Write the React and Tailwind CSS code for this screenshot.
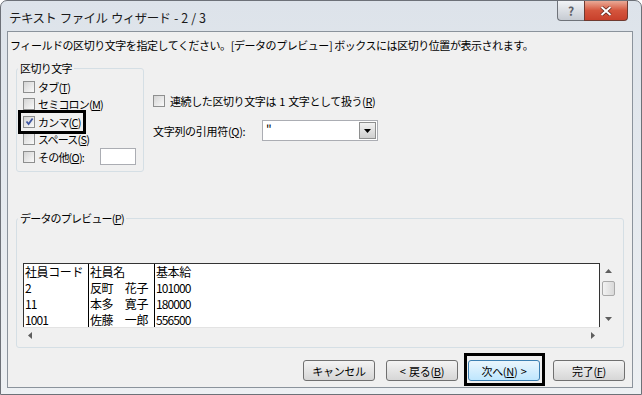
import React from "react";

const font = "font-['Noto_Sans_CJK_JP','Noto_Sans',sans-serif]";

function Check({ checked }) {
  return (
    <span className="flex h-[12px] w-[12px] shrink-0 items-center justify-center border border-[#8e8f8f] bg-linear-to-br from-[#d4d4d4] to-[#fafafa]">
      {checked && (
        <svg width="9" height="9" viewBox="0 0 9 9">
          <path d="M1.5 4.5 L3.6 7 L7.6 1.5" fill="none" stroke="#3d55a0" strokeWidth="1.8" />
        </svg>
      )}
    </span>
  );
}

function Row({ checked, children }) {
  return (
    <div className="flex h-[17.5px] items-center">
      <Check checked={checked} />
      <span className="ml-[3px] text-[11px] leading-[14px] tracking-[-0.8px]">{children}</span>
    </div>
  );
}

function Btn({ children, focus }) {
  return (
    <div
      className={
        focus
          ? "flex h-[21px] w-[72px] items-center justify-center whitespace-pre rounded-[3px] border border-[#3c7fb1] bg-linear-to-b from-[#eaf6fd] to-[#bee6fd] text-[11px] leading-[14px] tracking-[-0.3px]"
          : "flex h-[21px] w-[72px] items-center justify-center whitespace-pre rounded-[3px] border border-[#707070] bg-linear-to-b from-[#f4f4f4] to-[#d6d6d6] text-[11px] leading-[14px] tracking-[-0.3px]"
      }
    >
      {children}
    </div>
  );
}

function Tri({ dir }) {
  const d = {
    up: "M0 5 L3.5 1 L7 5 Z",
    down: "M0 2 L7 2 L3.5 6 Z",
    left: "M5 0 L5 7 L1 3.5 Z",
    right: "M2 0 L2 7 L6 3.5 Z",
  }[dir];
  return (
    <svg width="7" height="7" viewBox="0 0 7 7">
      <path d={d} fill="#5e5e5e" />
    </svg>
  );
}

const rows = [
  ["社員コード", "社員名", "基本給"],
  ["2", "反町　花子", "101000"],
  ["11", "本多　寛子", "180000"],
  ["1001", "佐藤　一郎", "556500"],
];

function Cell({ text, num }) {
  return (
    <div className={num ? "h-[16px] pl-[1px] text-[12px] leading-[16px] tracking-[-0.9px]" : "h-[16px] pl-[1px] text-[12px] leading-[16px] tracking-[-0.4px]"}>
      {text}
    </div>
  );
}

export default function App() {
  return (
    <div className={`h-[395px] w-[642px] bg-white text-black ${font}`}>
      <div className="flex h-full w-full flex-col rounded-t-[7px] border border-[#6d7178] bg-linear-to-b from-[#dde3ea] to-[#edf0f3]">
        <div className="flex h-[30px] shrink-0 items-start">
          <span className="whitespace-pre pl-[8px] pt-[8px] text-[12.5px] leading-[18px] tracking-[-0.6px] text-[#1a1a1a]">
            {"テキスト\u2004ファイル\u2004ウィザード\u2004-\u20042\u2004/\u20043"}
          </span>
          <div className="ml-auto mr-[13px] flex">
            <div className="flex h-[20px] w-[27px] items-center justify-center rounded-bl-[4px] border border-r-0 border-t-0 border-[#6f737a] bg-linear-to-b from-[#f1f3f6] to-[#c6cbd2] text-[12px] font-bold leading-none text-[#5c6068]">
              ?
            </div>
            <div className="flex h-[20px] w-[44px] items-center justify-center rounded-br-[4px] border border-t-0 border-[#6f3a30] bg-linear-to-b from-[#e9a996] via-[#d4553d] to-[#c8402b]">
              <svg width="12" height="10" viewBox="0 0 12 10">
                <path d="M1.5 1 L10.5 9 M10.5 1 L1.5 9" stroke="#5a1f16" strokeWidth="3.4" />
                <path d="M1.5 1 L10.5 9 M10.5 1 L1.5 9" stroke="#ffffff" strokeWidth="2" />
              </svg>
            </div>
          </div>
        </div>

        <div className="mb-[6px] ml-[6px] mr-[8px] flex flex-1 flex-col border border-[#8b939c] bg-[#f0f0f0]">
          <p className="ml-[2px] mt-[6px] text-[11px] leading-[14px] tracking-[-0.45px]">
            フィールドの区切り文字を指定してください。[データのプレビュー] ボックスには区切り位置が表示されます。
          </p>

          <div className="ml-[8px] mt-[9px] flex">
            <fieldset className="h-[111px] w-[128px] rounded-[3px] border border-[#d5dfe5]">
              <legend className="ml-[1px] px-[2px] text-[11px] leading-[14px] tracking-[-0.6px]">区切り文字</legend>
              <div className="pl-[6px] pt-[3px]">
                <Row>タブ(<u>T</u>)</Row>
                <Row>セミコロン(<u>M</u>)</Row>
                <div className="relative">
                  <Row checked>カンマ(<u>C</u>)</Row>
                  <div className="absolute -left-[5px] -top-[3px] h-[24px] w-[68px] border-[3px] border-black"></div>
                </div>
                <Row>スペース(<u>S</u>)</Row>
                <div className="flex h-[17.5px] items-center">
                  <Check />
                  <span className="ml-[3px] w-[62px] text-[11px] leading-[14px] tracking-[-0.8px]">
                    その他(<u>O</u>):
                  </span>
                  <div className="h-[17px] w-[36px] border border-[#abadb3] bg-white"></div>
                </div>
              </div>
            </fieldset>

            <div className="ml-[9px] flex flex-col">
              <div className="mt-[31px] flex h-[18px] items-center">
                <Check />
                <span className="ml-[5px] whitespace-pre text-[11px] leading-[14px] tracking-[-0.4px]">
                  {"連続した区切り文字は\u20041\u2004文字として扱う("}<u>R</u>)
                </span>
              </div>
              <div className="mt-[10px] flex h-[21px] items-center">
                <span className="w-[109px] text-[11px] leading-[14px] tracking-[-0.3px]">
                  文字列の引用符(<u>Q</u>):
                </span>
                <div className="flex h-[21px] w-[116px] items-start border border-[#abadb3] bg-white">
                  <span className="ml-[3px] mt-[1px] flex-1 text-[12px] leading-[14px]">"</span>
                  <div className="m-[1px] flex h-[17px] w-[17px] items-center justify-center border border-[#8e8f8f] bg-linear-to-b from-[#f2f2f2] to-[#cfcfcf]">
                    <svg width="7" height="4" viewBox="0 0 7 4">
                      <path d="M0 0 L7 0 L3.5 4 Z" fill="#000" />
                    </svg>
                  </div>
                </div>
              </div>
            </div>
          </div>

          <fieldset className="ml-[8px] mt-[39px] h-[137px] w-[608px] rounded-[3px] border border-[#d5dfe5]">
            <legend className="ml-[1px] px-[2px] text-[11px] leading-[14px] tracking-[-0.8px]">
              データのプレビュー(<u>P</u>)
            </legend>
            <div className="flex pl-[6px] pt-[38px]">
              <div className="flex w-[577px] flex-col">
                <div className="flex h-[64px] border-x border-t border-[#333] bg-white">
                  <div className="w-[65px] border-r border-black">
                    {rows.map((r, i) => (
                      <Cell key={i} text={r[0]} num={i > 0} />
                    ))}
                  </div>
                  <div className="w-[66px] border-r border-black">
                    {rows.map((r, i) => (
                      <Cell key={i} text={r[1]} />
                    ))}
                  </div>
                  <div className="flex-1">
                    {rows.map((r, i) => (
                      <Cell key={i} text={r[2]} num={i > 0} />
                    ))}
                  </div>
                </div>
                <div className="flex h-[16px] items-center justify-between border-t border-[#e3e3e3] px-[4px]">
                  <Tri dir="left" />
                  <Tri dir="right" />
                </div>
              </div>
              <div className="flex h-[64px] w-[16px] flex-col items-center">
                <div className="mt-[5px]"><Tri dir="up" /></div>
                <div className="mt-[6px] h-[15px] w-[13px] rounded-[2px] border border-[#a9a9a9] bg-linear-to-r from-[#f2f2f2] to-[#d9d9d9]"></div>
                <div className="mt-auto mb-[5px]"><Tri dir="down" /></div>
              </div>
            </div>
          </fieldset>

          <div className="mt-[12px] flex justify-end pr-[7px]">
            <Btn>キャンセル</Btn>
            <div className="ml-[11px]">
              <Btn>{"<\u2004戻る("}<u>B</u>)</Btn>
            </div>
            <div className="relative ml-[10px]">
              <Btn focus>次へ(<u>N</u>){"\u2004>"}</Btn>
              <div className="absolute -left-[4px] -top-[7px] h-[33px] w-[81px] border-[3px] border-black"></div>
            </div>
            <div className="ml-[13px]">
              <Btn>完了(<u>F</u>)</Btn>
            </div>
          </div>
        </div>
      </div>
    </div>
  );
}
